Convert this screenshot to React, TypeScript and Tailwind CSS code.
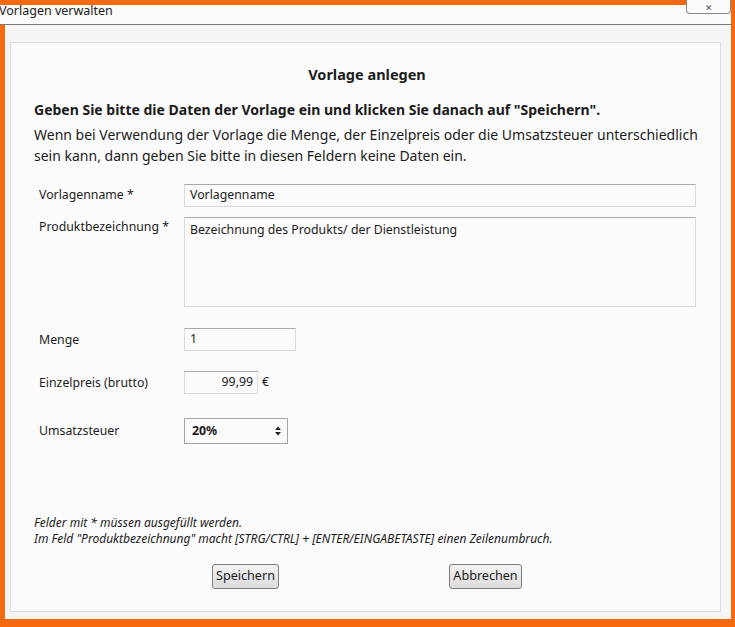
import React from "react";

const font = { fontFamily: '"Noto Sans", "Open Sans", sans-serif' };

export default function App() {
  return (
    <div
      className="relative w-[735px] h-[627px] bg-[#f56a0f] flex flex-col text-[#1b1b1b] overflow-hidden"
      style={font}
    >
      <div className="h-[5px] shrink-0" />
      <div className="h-[20px] shrink-0 mr-[4px] bg-[#fafbfa] border-b border-[#7a7a7a] flex items-start">
        <span className="ml-[-1px] mt-[-1px] text-[12.5px] leading-[14px] text-[#222]">Vorlagen verwalten</span>
      </div>
      <div className="absolute top-0 left-[686px] w-[45px] h-[14px] border border-t-0 border-[#8a8a8a] rounded-b-[4px] bg-[#fbfbfb] flex items-end justify-center">
        <span className="text-[9px] leading-none text-[#555] mb-[1px]">✕</span>
      </div>
      <div className="flex-1 ml-[5px] mr-[4px] mb-[8px] bg-[#f4f5f4] pt-[17px] pl-[5px] pr-[10px] pb-[7px] flex">
        <div className="flex-1 bg-[#fbfbfb] border border-[#dedede] flex flex-col pl-[23px] pr-[20px]">
          <div className="text-center font-bold text-[14.5px] mt-[21px] leading-[20px]">Vorlage anlegen</div>
          <div className="font-bold text-[14px] mt-[16px] leading-[20px]">
            Geben Sie bitte die Daten der Vorlage ein und klicken Sie danach auf "Speichern".
          </div>
          <div className="text-[14px] leading-[21px] mt-[4px] mr-[-8px]">
            Wenn bei Verwendung der Vorlage die Menge, der Einzelpreis oder die Umsatzsteuer unterschiedlich sein kann, dann geben Sie bitte in diesen Feldern keine Daten ein.
          </div>

          <div className="flex flex-col mt-[18px] text-[12.3px] pr-[4px]">
            <div className="flex items-center h-[23px]">
              <div className="w-[150px] pl-[5px]">Vorlagenname *</div>
              <div className="flex-1 h-[23px] border border-[#dcdcdc] border-t-[#a9a9a9] bg-[#fbfbfb] flex items-center pl-[5px]">
                Vorlagenname
              </div>
            </div>
            <div className="flex items-start mt-[10px]">
              <div className="w-[150px] pl-[5px] pt-[1px]">Produktbezeichnung *</div>
              <div className="flex-1 h-[90px] border border-[#dcdcdc] border-t-[#a9a9a9] bg-[#fbfbfb] pl-[5px] pt-[3px]">
                Bezeichnung des Produkts/ der Dienstleistung
              </div>
            </div>
            <div className="flex items-center h-[23px] mt-[21px]">
              <div className="w-[150px] pl-[5px] pt-[1px]">Menge</div>
              <div className="w-[112px] h-[23px] border border-[#dcdcdc] border-t-[#a9a9a9] bg-[#fbfbfb] flex items-center pl-[5px]">
                1
              </div>
            </div>
            <div className="flex items-center h-[23px] mt-[20px]">
              <div className="w-[150px] pl-[5px] pt-[1px]">Einzelpreis (brutto)</div>
              <div className="w-[74px] h-[23px] border border-[#dcdcdc] border-t-[#a9a9a9] bg-[#fbfbfb] flex items-center justify-end pr-[4px]">
                99,99
              </div>
              <span className="ml-[4px]">€</span>
            </div>
            <div className="flex items-center h-[26px] mt-[24px]">
              <div className="w-[150px] pl-[5px]">Umsatzsteuer</div>
              <div className="w-[104px] h-[26px] border border-[#a4a4a4] bg-[#fbfbfb] flex items-center justify-between pl-[7px] pr-[6px]">
                <span className="font-bold">20%</span>
                <svg width="6" height="10" viewBox="0 0 6 10">
                  <path d="M0 4 L3 0.5 L6 4 Z" fill="#222" />
                  <path d="M0 6 L3 9.5 L6 6 Z" fill="#222" />
                </svg>
              </div>
            </div>
          </div>

          <div className="mt-[71px] italic text-[12px] leading-[16px]">
            <div>Felder mit * müssen ausgefüllt werden.</div>
            <div>Im Feld "Produktbezeichnung" macht [STRG/CTRL] + [ENTER/EINGABETASTE] einen Zeilenumbruch.</div>
          </div>

          <div className="flex mt-[17px] text-[12.6px]">
            <button className="ml-[178px] w-[67px] h-[25px] border border-[#7d7d7d] rounded-[3px] bg-gradient-to-b from-[#f3f3f3] to-[#dcdcdc] flex items-center justify-center">
              Speichern
            </button>
            <button className="ml-[170px] w-[73px] h-[25px] border border-[#7d7d7d] rounded-[3px] bg-gradient-to-b from-[#f3f3f3] to-[#dcdcdc] flex items-center justify-center">
              Abbrechen
            </button>
          </div>
        </div>
      </div>
    </div>
  );
}
